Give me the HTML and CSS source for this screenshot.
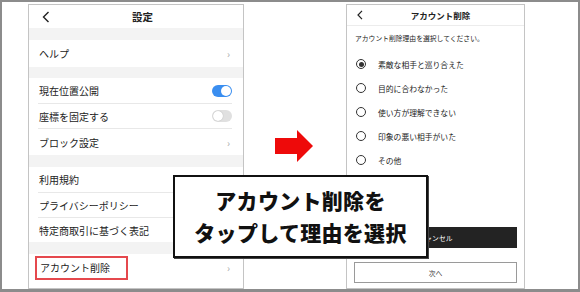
FILE: index.html
```html
<!DOCTYPE html>
<html lang="ja">
<head>
<meta charset="utf-8">
<link rel="stylesheet" href="styles.css">
</head>
<body>
<div class="frame">
  <section class="phone phone-left">
    <header class="lhead">
      <svg class="back" width="8" height="12" viewBox="0 0 8 12"><path d="M6.5 1 L1.5 6 L6.5 11" fill="none" stroke="#222" stroke-width="1.4"/></svg>
      <span class="ltitle">設定</span>
      <span></span>
    </header>
    <div class="band"></div>
    <div class="group">
      <div class="row tall"><span>ヘルプ</span><span class="chev">›</span></div>
    </div>
    <div class="band b11"></div>
    <div class="group">
      <div class="row"><span>現在位置公開</span><span class="toggle on"></span></div>
      <div class="row"><span>座標を固定する</span><span class="toggle off"></span></div>
      <div class="row tall"><span>ブロック設定</span><span class="chev">›</span></div>
    </div>
    <div class="band"></div>
    <div class="group">
      <div class="row"><span>利用規約</span></div>
      <div class="row"><span>プライバシーポリシー</span></div>
      <div class="row"><span>特定商取引に基づく表記</span></div>
    </div>
    <div class="band"></div>
    <div class="group">
      <div class="row tall"><span class="hl">アカウント削除</span><span class="chev">›</span></div>
    </div>
  </section>

  <div class="arrow-wrap">
    <svg width="38" height="32" viewBox="0 0 38 32"><path d="M0 8 H22 V0 L38 16 L22 32 V24 H0 Z" fill="#ee0a0a"/></svg>
  </div>

  <section class="phone phone-right">
    <header class="rhead">
      <svg class="back" width="6" height="10" viewBox="0 0 6 10"><path d="M5 0.8 L1 5 L5 9.2" fill="none" stroke="#222" stroke-width="1.2"/></svg>
      <span class="rtitle">アカウント削除</span>
      <span></span>
    </header>
    <p class="intro">アカウント削除理由を選択してください。</p>
    <ul class="reasons">
      <li><span class="radio checked"></span>素敵な相手と巡り合えた</li>
      <li><span class="radio"></span>目的に合わなかった</li>
      <li><span class="radio"></span>使い方が理解できない</li>
      <li><span class="radio"></span>印象の悪い相手がいた</li>
      <li><span class="radio"></span>その他</li>
    </ul>
    <div class="btns">
      <div class="btn dark">キャンセル</div>
      <div class="btn light">次へ</div>
    </div>
  </section>

  <div class="callout">アカウント削除を<br>タップして理由を選択</div>
</div>
</body>
</html>
```

FILE: styles.css
```css
* { box-sizing: border-box; }
html, body { margin: 0; padding: 0; background: #fff; }
body { font-family: "Noto Sans CJK JP", "Noto Sans", sans-serif; color: #222; }

.frame {
  position: relative;
  width: 580px;
  height: 292px;
  border: 2px solid #8c8c8c;
  border-bottom-width: 3px;
  display: flex;
  align-items: flex-start;
  padding: 2px 0 0 26px;
}

.phone {
  border: 1px solid #c4c4c4;
  background: #fff;
  height: 285px;
  display: flex;
  flex-direction: column;
}
.phone-left { width: 216px; }

.lhead {
  height: 23px;
  display: grid;
  grid-template-columns: 40px 1fr 40px;
  align-items: center;
  padding-left: 13px;
}
.lhead .back { display: block; }
.ltitle { text-align: center; font-size: 10.5px; font-weight: 700; }

.band { height: 12px; background: #f3f3f3; }
.band.b11 { height: 11px; }

.row {
  height: 25px;
  margin: 0 11px 0 9px;
  padding-left: 1px;
  display: flex;
  align-items: center;
  justify-content: space-between;
  font-size: 10px;
  border-top: 1px solid #e8e8e8;
}
.row:first-child { border-top: none; }
.row.tall { height: 27px; }

.chev { color: #aaa; font-size: 10px; margin-right: 2px; }

.toggle {
  width: 20px;
  height: 12px;
  border-radius: 6px;
  position: relative;
}
.toggle.on { background: #3a8ef0; }
.toggle.off { background: #e0e0e0; }
.toggle::after {
  content: "";
  position: absolute;
  top: 1px;
  width: 10px;
  height: 10px;
  border-radius: 50%;
  background: #fff;
}
.toggle.on::after { right: 1px; }
.toggle.off::after { left: 1px; box-shadow: 0 0 1px rgba(0,0,0,.3); }

.hl {
  margin-left: -4px;
  border: 2px solid #e5484d;
  padding: 3px 16px 3px 3px;
  height: 24px;
  display: inline-flex;
  align-items: center;
}

.arrow-wrap {
  width: 102px;
  display: flex;
  justify-content: center;
  padding-top: 126px;
  padding-right: 2px;
}

.phone-right { width: 179px; }
.rhead {
  height: 21px;
  display: grid;
  grid-template-columns: 30px 1fr 30px;
  align-items: center;
  padding-left: 10px;
  border-bottom: 1px solid #ececec;
}
.rhead .back { display: block; }
.rtitle { text-align: center; font-size: 8.5px; font-weight: 700; }

.intro { margin: 7px 0 0 8px; font-size: 6.8px; line-height: 10px; }

.reasons { list-style: none; margin: 9px 0 0 0; padding: 0 0 0 9px; }
.reasons li {
  height: 24px;
  display: flex;
  align-items: center;
  font-size: 7.8px;
}
.radio {
  width: 10px;
  height: 10px;
  border: 1.2px solid #333;
  border-radius: 50%;
  margin-right: 12px;
  display: flex;
  align-items: center;
  justify-content: center;
}
.radio.checked::after {
  content: "";
  width: 5px;
  height: 5px;
  border-radius: 50%;
  background: #333;
}

.btns { margin-top: auto; padding: 0 7px 5px 7px; display: flex; flex-direction: column; gap: 14px; }
.btn {
  height: 21px;
  display: flex;
  align-items: center;
  justify-content: center;
  font-size: 6.8px;
}
.btn.dark { background: #232323; color: #fff; }
.btn.light { border: 1px solid #9a9a9a; color: #333; }

.callout {
  position: absolute;
  left: 171px;
  top: 173px;
  width: 255px;
  height: 83px;
  background: #fff;
  border: 2px solid #111;
  box-shadow: 1px 1px 0 #444;
  text-align: center;
  font-size: 21px;
  font-weight: 900;
  line-height: 32px;
  padding-top: 7px;
  color: #111;
  letter-spacing: 0.3px;
}
```
